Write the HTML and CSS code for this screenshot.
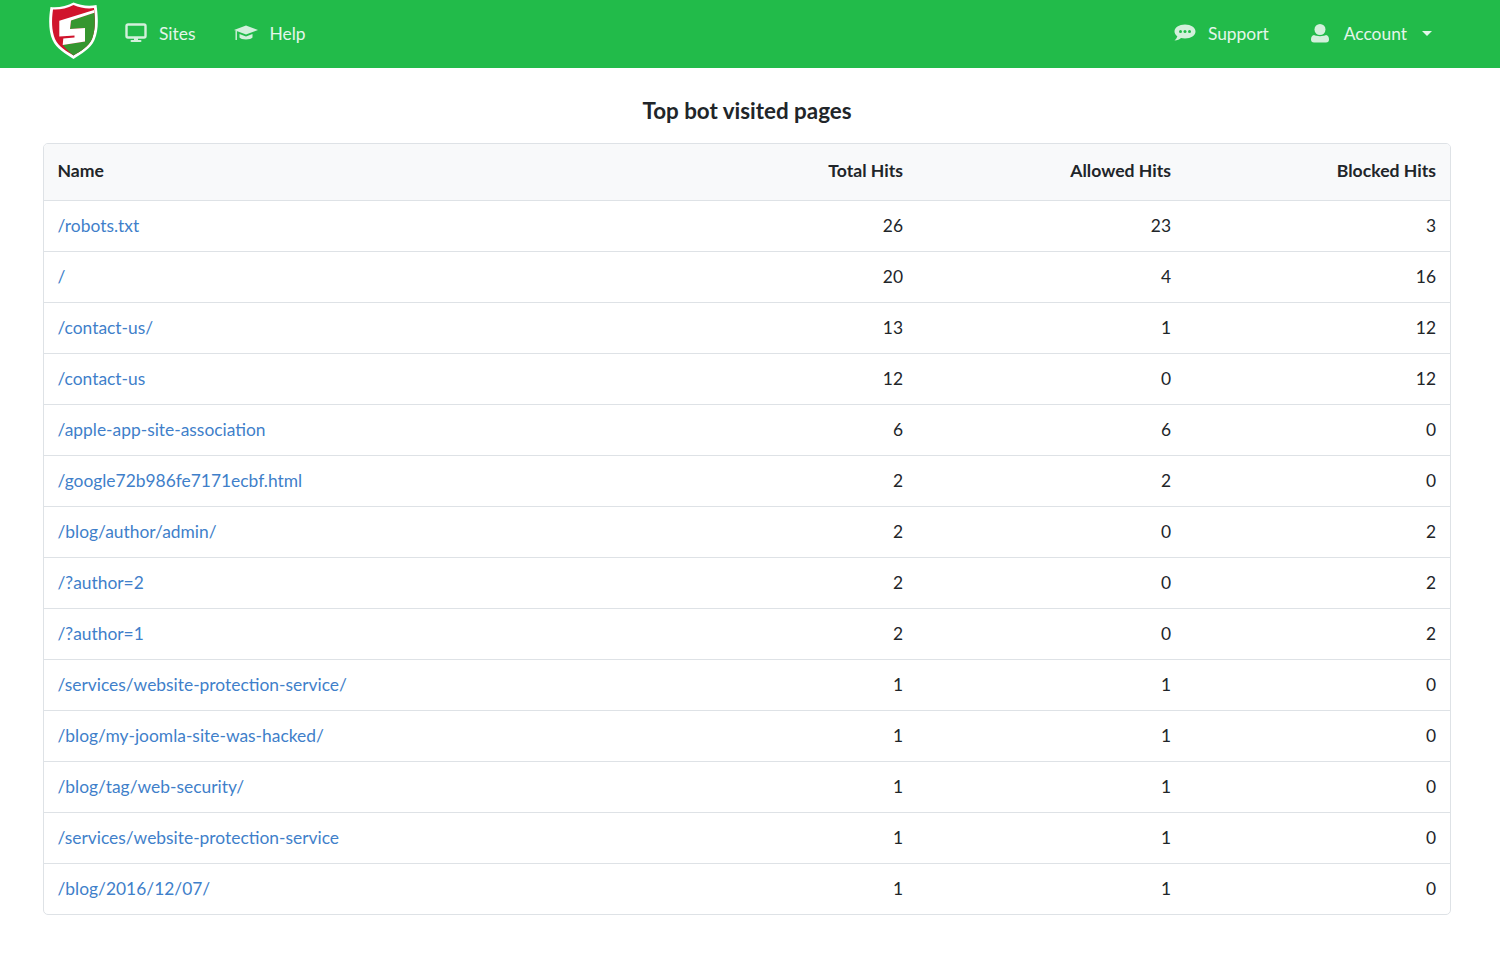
FILE: index.html
```html
<!DOCTYPE html>
<html lang="en">
<head>
    <meta charset="UTF-8">
    <meta name="viewport" content="width=device-width, initial-scale=1.0">
    <title>Top bot visited pages</title>
    <link rel="stylesheet" href="styles.css">
</head>
<body>
    <nav class="navbar">
        <a class="logo" href="#">
            <svg width="50" height="57" viewBox="0 0 50 57">
                <path d="M24.500 0.500 C31 3.500 40 4.500 47.500 3 C49.500 17 49.500 29 45.500 38 C41.500 47 32.500 51.500 24.500 57 C16.500 51.500 7.500 47 3.500 38 C-0.500 29 -0.500 17 1.500 5 C9 6 18 4 24.500 0.500 Z" fill="#fff"/>
                <path d="M24.500 3 C31 6 39 7 45 6 C46.500 18 46.500 28 43 37 C39.500 45 31.500 49 24.500 53.500 C17.500 49 9.500 45 6 37 C2.500 28 2.500 18 4 7.500 C10 8 18 6.500 24.500 3 Z" fill="#d0142c"/>
                <path d="M45.300 10.700 L22 18.500 L21 27 L36 26 L36 39.500 L13.700 43 C17 47 21 50.500 24.500 53.500 C31.500 49 39.500 45 43 37 C46 29 46.300 20 45.300 10.700 Z" fill="#35962f"/>
                <path d="M10.300 18.700 L45 8 L45.300 10.700 L22 18.500 L21 27 L36 26 L36 39.500 L13.700 43 L14.300 36.500 L25.500 35.500 L25.500 33.500 L10.300 34.500 Z" fill="#fff"/>
            </svg>
        </a>
        <a class="nav-link sites" href="#">
            <svg class="nav-icon" width="22" height="20" viewBox="0 0 22 20">
                <path d="M3 1.500 H19 A1.500 1.500 0 0 1 20.500 3 V13 A1.500 1.500 0 0 1 19 14.500 H3 A1.500 1.500 0 0 1 1.500 13 V3 A1.500 1.500 0 0 1 3 1.500 Z" fill="none" stroke="#d3f0dc" stroke-width="2.400"/>
                <rect x="9" y="14.500" width="4" height="3" fill="#d3f0dc"/>
                <rect x="5.500" y="17" width="11" height="2" rx="1" fill="#d3f0dc"/>
            </svg>
            Sites
        </a>
        <a class="nav-link help" href="#">
            <svg class="nav-icon" width="24" height="16" viewBox="0 0 24 16">
                <path d="M12 0.500 L24 5 L12 9.500 L0 5 Z" fill="#d3f0dc"/>
                <path d="M5.500 9 L12 11.500 L18.500 9 V12.500 C17 15 7 15 5.500 12.500 Z" fill="#d3f0dc"/>
                <rect x="1.500" y="6" width="1.400" height="9" fill="#d3f0dc"/>
            </svg>
            Help
        </a>
        <div class="nav-spacer"></div>
        <a class="nav-link support" href="#">
            <svg class="nav-icon" width="22" height="18" viewBox="0 0 22 18">
                <path d="M11 0.500 C17 0.500 21.500 3.500 21.500 7.500 C21.500 11.500 17 14.500 11 14.500 C9.500 14.500 8 14.300 7 14 C5.500 15.500 3.500 16.500 0.500 16.500 C2 15.200 3 13.800 3.300 12.300 C1.500 11 0.500 9.300 0.500 7.500 C0.500 3.500 5 0.500 11 0.500 Z" fill="#d3f0dc"/>
                <circle cx="6.500" cy="7.500" r="1.500" fill="#22bb4a"/>
                <circle cx="11" cy="7.500" r="1.500" fill="#22bb4a"/>
                <circle cx="15.500" cy="7.500" r="1.500" fill="#22bb4a"/>
            </svg>
            Support
        </a>
        <a class="nav-link account" href="#">
            <svg class="nav-icon" width="20" height="19" viewBox="0 0 20 19">
                <circle cx="10" cy="5.500" r="5.500" fill="#d3f0dc"/>
                <path d="M4 11 C6 12.500 14 12.500 16 11 C18 11.500 19 13 19 15.500 C19 17.500 18 18.500 16 18.500 H4 C2 18.500 1 17.500 1 15.500 C1 13 2 11.500 4 11 Z" fill="#d3f0dc"/>
            </svg>
            Account
            <span class="caret"></span>
        </a>
    </nav>

    <main class="content">
        <h1 class="page-title">Top bot visited pages</h1>
        <div class="table-box">
            <table class="pages-table">
                <thead>
                    <tr>
                        <th class="col-name">Name</th>
                        <th class="col-total num">Total Hits</th>
                        <th class="col-allowed num">Allowed Hits</th>
                        <th class="col-blocked num">Blocked Hits</th>
                    </tr>
                </thead>
                <tbody>
                    <tr><td><a href="#">/robots.txt</a></td><td class="num">26</td><td class="num">23</td><td class="num">3</td></tr>
                    <tr><td><a href="#">/</a></td><td class="num">20</td><td class="num">4</td><td class="num">16</td></tr>
                    <tr><td><a href="#">/contact-us/</a></td><td class="num">13</td><td class="num">1</td><td class="num">12</td></tr>
                    <tr><td><a href="#">/contact-us</a></td><td class="num">12</td><td class="num">0</td><td class="num">12</td></tr>
                    <tr><td><a href="#">/apple-app-site-association</a></td><td class="num">6</td><td class="num">6</td><td class="num">0</td></tr>
                    <tr><td><a href="#">/google72b986fe7171ecbf.html</a></td><td class="num">2</td><td class="num">2</td><td class="num">0</td></tr>
                    <tr><td><a href="#">/blog/author/admin/</a></td><td class="num">2</td><td class="num">0</td><td class="num">2</td></tr>
                    <tr><td><a href="#">/?author=2</a></td><td class="num">2</td><td class="num">0</td><td class="num">2</td></tr>
                    <tr><td><a href="#">/?author=1</a></td><td class="num">2</td><td class="num">0</td><td class="num">2</td></tr>
                    <tr><td><a href="#">/services/website-protection-service/</a></td><td class="num">1</td><td class="num">1</td><td class="num">0</td></tr>
                    <tr><td><a href="#">/blog/my-joomla-site-was-hacked/</a></td><td class="num">1</td><td class="num">1</td><td class="num">0</td></tr>
                    <tr><td><a href="#">/blog/tag/web-security/</a></td><td class="num">1</td><td class="num">1</td><td class="num">0</td></tr>
                    <tr><td><a href="#">/services/website-protection-service</a></td><td class="num">1</td><td class="num">1</td><td class="num">0</td></tr>
                    <tr><td><a href="#">/blog/2016/12/07/</a></td><td class="num">1</td><td class="num">1</td><td class="num">0</td></tr>
                </tbody>
            </table>
        </div>
    </main>
</body>
</html>
```

FILE: styles.css
```css
* {
    box-sizing: border-box;
}

body {
    margin: 0;
    background-color: #ffffff;
    color: #212529;
    font-family: Lato, "Liberation Sans", sans-serif;
    font-size: 17.4px;
}

a {
    text-decoration: none;
}

.navbar {
    display: flex;
    align-items: center;
    height: 68px;
    padding: 0 53px 2px 49px;
    background-color: #22bb4a;
}

.logo {
    display: flex;
    width: 50px;
    height: 57px;
    margin-top: -5px;
    margin-right: 26px;
}

.nav-link {
    display: flex;
    align-items: center;
    color: #e4f6ea;
    margin-right: 38px;
}

.nav-icon {
    margin-right: 12px;
}

.nav-spacer {
    flex: 1;
}

.sites {
    margin-right: 39px;
}

.help .nav-icon {
    margin-right: 11px;
}

.support {
    margin-right: 41px;
}

.account {
    margin-right: 15px;
}

.account .nav-icon {
    margin-right: 14px;
}

.caret {
    width: 0;
    height: 0;
    margin-left: 15px;
    border-top: 5px solid #e4f6ea;
    border-left: 5px solid transparent;
    border-right: 5px solid transparent;
}

.content {
    padding: 0 49px 0 43px;
}

.page-title {
    margin: 26px 0 16px;
    font-size: 22.4px;
    font-weight: 700;
    line-height: 33px;
    text-align: center;
}

.table-box {
    border: 1px solid #dee2e6;
    border-radius: 5px;
    overflow: hidden;
}

.pages-table {
    width: 100%;
    table-layout: fixed;
    border-collapse: collapse;
}

.pages-table th {
    height: 56px;
    padding: 0 14px 2px;
    background-color: #f8f9fa;
    font-size: 17.6px;
    font-weight: 700;
    text-align: left;
}

.pages-table td {
    height: 51px;
    padding: 0 14px;
    border-top: 1px solid #dee2e6;
}

.pages-table th:first-child,
.pages-table td:first-child {
    padding-left: 13.500px;
}

.pages-table a {
    color: #3f7fca;
}

.pages-table .num {
    text-align: right;
}

.col-name {
    width: 605px;
}

.col-total,
.col-allowed {
    width: 268px;
}

.col-blocked {
    width: 265px;
}
```
